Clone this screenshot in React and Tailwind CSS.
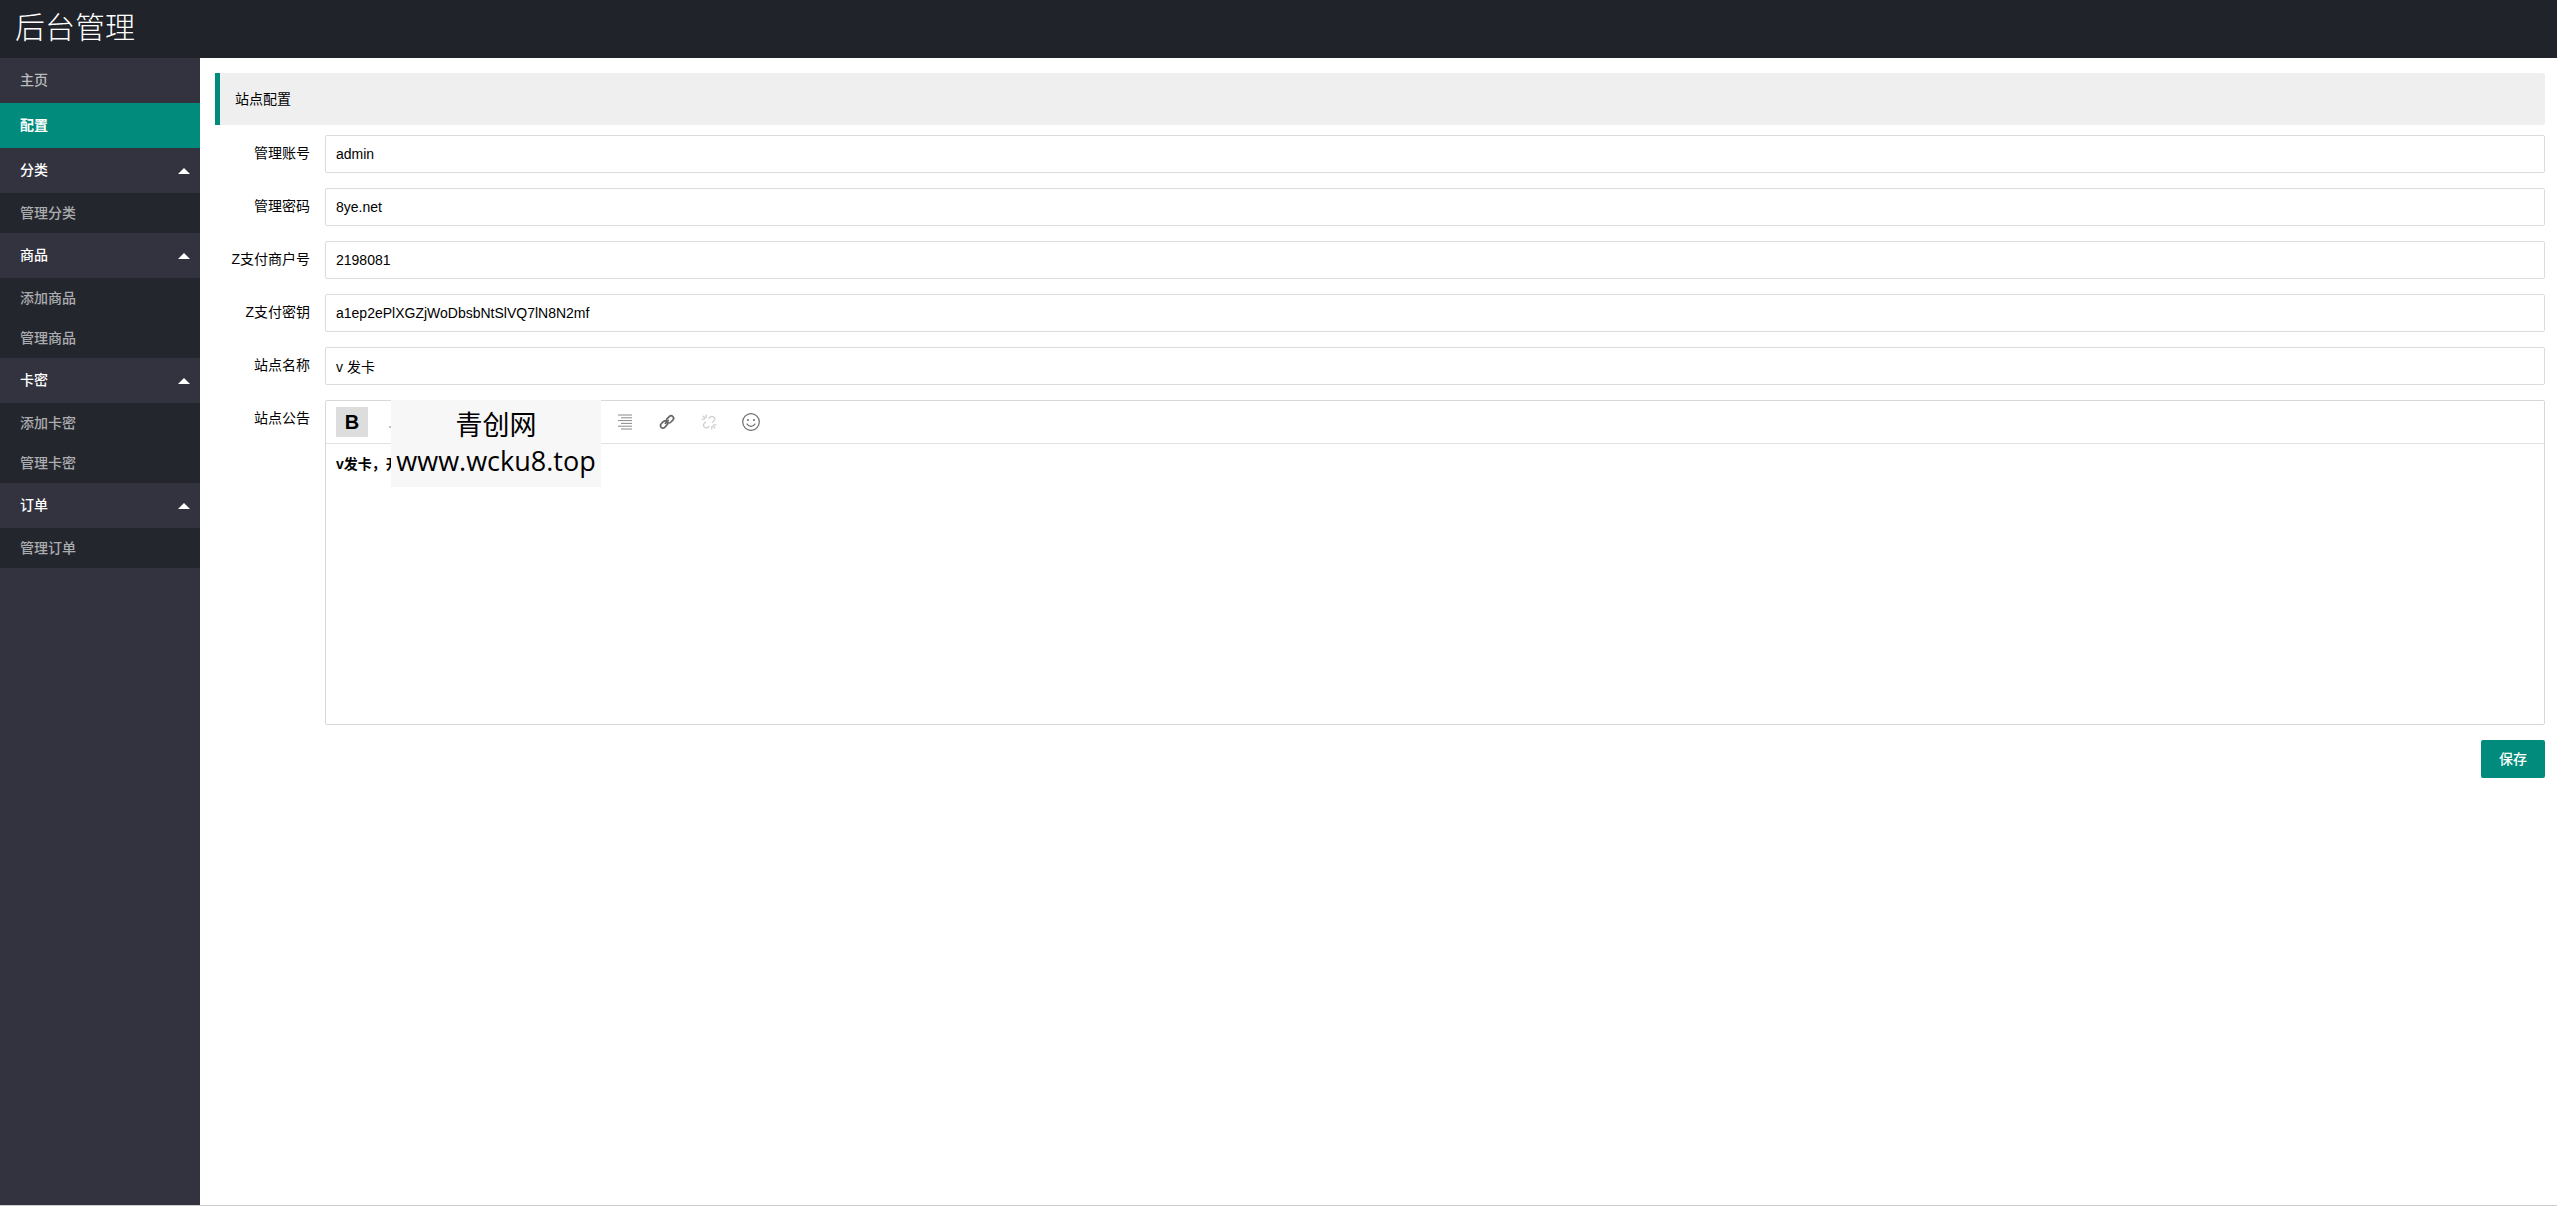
import React from "react";

const menu = [
  { title: "分类", items: ["管理分类"] },
  { title: "商品", items: ["添加商品", "管理商品"] },
  { title: "卡密", items: ["添加卡密", "管理卡密"] },
  { title: "订单", items: ["管理订单"] },
];

const fields = [
  { id: "account", label: "管理账号", value: "admin" },
  { id: "password", label: "管理密码", value: "8ye.net" },
  { id: "merchant", label: "Z支付商户号", value: "2198081" },
  { id: "secret", label: "Z支付密钥", value: "a1ep2ePlXGZjWoDbsbNtSlVQ7lN8N2mf" },
  { id: "site", label: "站点名称", value: "v 发卡" },
];

const labelClass = "w-[110px] shrink-0 px-[15px] py-2 text-right leading-5 whitespace-nowrap";

function Lines({ rows }) {
  return (
    <svg className="h-4 w-4" viewBox="0 0 16 16" fill="none" stroke="#8a8a8a" strokeWidth="1">
      {rows.map(([a, b], i) => (
        <path key={i} d={`M${a} ${1 + i * 2.8}H${b}`} />
      ))}
    </svg>
  );
}

function LinkIcon() {
  return (
    <svg className="h-4 w-4" viewBox="0 0 16 16" fill="none" stroke="#666" strokeWidth="1.7">
      <rect x="7" y="2.9" width="8" height="5" rx="2.5" transform="rotate(-45 11 5.4)" />
      <rect x="1" y="8" width="8" height="5" rx="2.5" transform="rotate(-45 5 10.5)" />
      <path d="M6.4 9.4l3-3" strokeLinecap="round" />
    </svg>
  );
}

function UnlinkIcon() {
  return (
    <svg className="h-4 w-4" viewBox="0 0 16 16" fill="none" stroke="#cfcfcf" strokeWidth="1.3" strokeLinecap="round">
      <path d="M8 4.2l1.2-1.2q1.9-1.4 3.6.1t.2 3.6l-1.6 1.7" />
      <path d="M8 12.2l-1.2 1.2q-1.9 1.2-3.5-.3t-.2-3.5l1.5-1.6" />
      <path d="M5.2 1v2.4M1 5.2h2.4M2.2 2.2l1.8 1.8M10.8 15v-2.4M15 10.8h-2.4M13.8 13.8L12 12" />
    </svg>
  );
}

function FaceIcon() {
  return (
    <svg className="h-[18px] w-[18px]" viewBox="0 0 18 18" fill="none" stroke="#6b6b6b" strokeWidth="1.2">
      <circle cx="9" cy="9" r="8.3" />
      <path d="M5 11q1.4 2.4 4 2.4t4-2.4" strokeLinecap="round" />
      <circle cx="6" cy="6.9" r="1" fill="#6b6b6b" stroke="none" />
      <circle cx="12" cy="6.9" r="1" fill="#6b6b6b" stroke="none" />
    </svg>
  );
}

function Tool({ label, active, children }) {
  return (
    <button
      type="button"
      aria-label={label}
      className={
        active
          ? "flex h-[30px] w-8 items-center justify-center bg-[#ddd]"
          : "flex h-[30px] w-8 items-center justify-center"
      }
    >
      {children}
    </button>
  );
}

function StyleGlyph({ children }) {
  return (
    <svg className="h-4 w-4" viewBox="0 0 16 16" fill="none" stroke="#858585" strokeWidth="1.2">
      {children}
    </svg>
  );
}

function Toolbar() {
  return (
    <div className="flex items-center gap-[10px] border-b border-[#e2e2e2] px-[10px] py-[6px]">
      <Tool label="加粗" active>
        <span className="text-xl leading-5 font-bold">B</span>
      </Tool>
      <Tool label="斜体">
        <StyleGlyph>
          <path d="M6 2h6M3 13h6M10 2L6 13" />
        </StyleGlyph>
      </Tool>
      <Tool label="下划线">
        <StyleGlyph>
          <path d="M4 2v6q0 3 4 3t4-3V2M3 14h10" />
        </StyleGlyph>
      </Tool>
      <Tool label="删除线">
        <StyleGlyph>
          <path d="M2 8h12M12 4q-4-3-7 0M4 12q4 3 7 0" />
        </StyleGlyph>
      </Tool>
      <span className="mx-[5px] h-5 w-px bg-[#e2e2e2]" />
      <Tool label="左对齐">
        <Lines rows={[[1, 15], [1, 11], [1, 15], [1, 11], [1, 15], [1, 11]]} />
      </Tool>
      <Tool label="居中对齐">
        <Lines rows={[[1, 15], [3, 13], [1, 15], [3, 13], [1, 15], [3, 13]]} />
      </Tool>
      <Tool label="右对齐">
        <Lines rows={[[1, 15], [4, 15], [1, 15], [4, 15], [1, 15], [4, 15]]} />
      </Tool>
      <Tool label="插入链接">
        <LinkIcon />
      </Tool>
      <Tool label="清除链接">
        <UnlinkIcon />
      </Tool>
      <Tool label="表情">
        <FaceIcon />
      </Tool>
    </div>
  );
}

function Sidebar() {
  return (
    <nav className="w-[200px] shrink-0 bg-[#32333e]">
      <a href="#home" className="block px-5 leading-[45px] font-medium text-[#b9babd]">
        主页
      </a>
      <a href="#config" className="block bg-[#008b7d] px-5 leading-[45px] font-bold text-white">
        配置
      </a>
      {menu.map((group) => (
        <div key={group.title}>
          <button
            type="button"
            className="flex w-full items-center justify-between pr-[10px] pl-5 leading-[45px] font-medium text-white"
          >
            {group.title}
            <svg className="h-[6px] w-3" viewBox="0 0 12 6" fill="#fff">
              <path d="M0 6L6 0l6 6z" />
            </svg>
          </button>
          <div className="bg-[#24262d]">
            {group.items.map((item) => (
              <a key={item} href={`#${item}`} className="block px-5 leading-10 font-medium text-[#abacaf]">
                {item}
              </a>
            ))}
          </div>
        </div>
      ))}
    </nav>
  );
}

export default function App() {
  return (
    <div className="flex h-screen flex-col bg-white pb-[3px] font-['Liberation_Sans','Noto_Sans_CJK_SC',sans-serif] text-sm text-black">
      <header className="flex h-[58px] shrink-0 items-start bg-[#20232a] px-[15px] pt-1">
        <h1 className="text-[30px] leading-[48px] font-light text-white">后台管理</h1>
      </header>
      <div className="flex grow border-b border-[#ccc]">
        <Sidebar />
        <main className="min-w-0 grow pt-[15px] pr-3 pl-[15px]">
          <h2 className="mb-[10px] rounded-r-xs border-l-[5px] border-[#008b7d] bg-[#efefef] p-[15px] leading-[22px]">
            站点配置
          </h2>
          <form className="flex flex-col gap-[15px]">
            {fields.map((f) => (
              <div key={f.id} className="flex">
                <label htmlFor={f.id} className={labelClass}>
                  {f.label}
                </label>
                <input
                  id={f.id}
                  type="text"
                  defaultValue={f.value}
                  className="h-[38px] min-w-0 grow rounded-xs border border-[#dcdcdc] px-[10px]"
                />
              </div>
            ))}
            <div className="flex">
              <label htmlFor="notice" className={labelClass}>
                站点公告
              </label>
              <div className="relative min-w-0 grow rounded-xs border border-[#d8d8d8]">
                <Toolbar />
                <textarea
                  id="notice"
                  defaultValue="v发卡，开"
                  className="block h-[280px] w-full resize-none px-[10px] py-[10px] leading-5 font-bold outline-none"
                />
                <div className="absolute -top-px left-[65px] flex h-[87px] w-[210px] flex-col items-center bg-[#f7f7f7] pt-[7px] font-['Open_Sans','Noto_Sans_CJK_SC',sans-serif] text-[27px] leading-9">
                  <span>青创网</span>
                  <span>www.wcku8.top</span>
                </div>
              </div>
            </div>
            <button
              type="submit"
              className="h-[38px] self-end rounded-xs bg-[#008b7d] px-[18px] font-medium text-white"
            >
              保存
            </button>
          </form>
        </main>
      </div>
    </div>
  );
}
